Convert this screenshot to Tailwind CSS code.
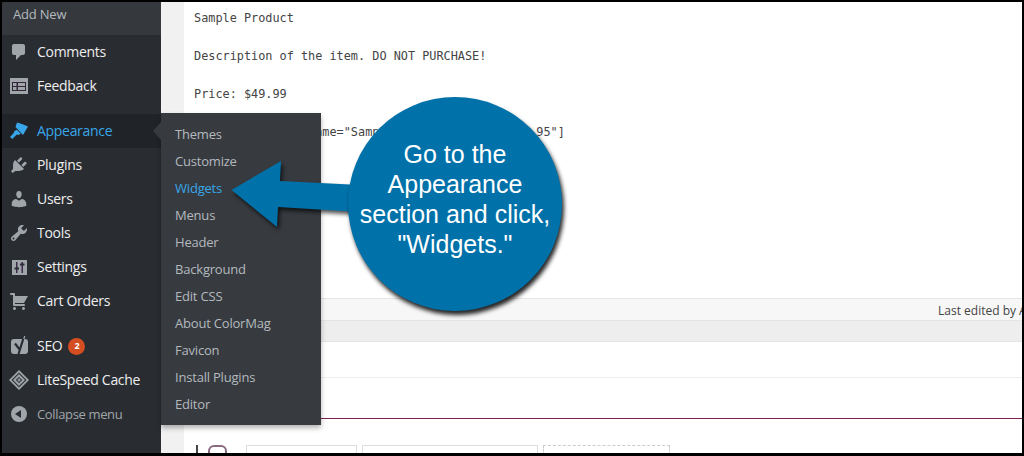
<!DOCTYPE html>
<html lang="en">
<head>
    <meta charset="UTF-8">
    <title>Appearance menu - Widgets</title>
    <script src="https://cdn.jsdelivr.net/npm/@tailwindcss/browser@4"></script>
</head>
<body class="bg-black overflow-hidden">
    <div class="relative w-[1024px] h-[456px] border-2 border-b-[3px] border-black flex overflow-hidden font-['Open_Sans',sans-serif]">

        <!-- Sidebar -->
        <aside class="w-[159px] shrink-0 bg-[#292d32] text-[14px] tracking-[-0.3px] text-[#eeeeee]">
            <div class="h-[33px] bg-[#35393e] pl-[11px] text-[13px] tracking-[-0.2px] leading-[24px] text-[#b4b9be]">Add New</div>

            <div class="h-[34px] flex items-center gap-[8px] pl-[7px]">
                <svg class="w-5 h-5" viewBox="0 0 20 20" fill="#a0a5aa"><path d="M5 2h9c1.1 0 2 .9 2 2v7c0 1.1-.9 2-2 2h-2l-5 5v-5H5c-1.1 0-2-.9-2-2V4c0-1.1.9-2 2-2z"/></svg>
                <span class="pb-[2px]">Comments</span>
            </div>
            <div class="h-[34px] flex items-center gap-[8px] pl-[7px]">
                <svg class="w-5 h-5" viewBox="0 0 20 20"><rect x="1" y="2" width="18" height="16" fill="#a0a5aa"/><rect x="3" y="6" width="14" height="9" fill="#33263a"/><rect x="4" y="7" width="3.5" height="3" fill="#a0a5aa"/><rect x="4" y="11" width="3.5" height="3" fill="#a0a5aa"/><rect x="9" y="7" width="7" height="3" fill="#a0a5aa"/><rect x="9" y="11" width="7" height="3" fill="#a0a5aa"/></svg>
                <span class="pb-[2px]">Feedback</span>
            </div>

            <div class="h-[34px] mt-[11px] flex items-center gap-[8px] pl-[7px] bg-[#202428] text-[#38a6e8]">
                <svg class="w-5 h-5" viewBox="0 0 20 20" fill="#38a6e8"><path d="M8 1.500l5 1.500 6 2.500-5 8.500-7.500-8zM7.800 8.800l4 4-2.600 1.200-1.400-.6L3.300 18 1 16l4-4.300-.1-1.200z"/></svg>
                <span class="pb-[2px]">Appearance</span>
            </div>
            <div class="h-[34px] flex items-center gap-[8px] pl-[7px]">
                <svg class="w-5 h-5" viewBox="0 0 20 20" fill="#a0a5aa"><path d="M13.11 4.36L9.87 7.6 8 5.73l3.24-3.24c.35-.34 1.05-.2 1.56.32.52.51.66 1.21.31 1.55zm-8 1.77l.91-1.12 9.01 9.01-1.19.84c-.71.71-2.63 1.16-3.82 1.16H6.14L4.9 17.26c-.59.59-1.54.59-2.12 0-.59-.58-.59-1.53 0-2.12l1.24-1.24v-3.88c0-1.13.4-3.19 1.09-3.89zm7.26 3.97l3.24-3.24c.34-.35 1.04-.21 1.55.31.52.51.66 1.21.31 1.55l-3.24 3.25z"/></svg>
                <span class="pb-[2px]">Plugins</span>
            </div>
            <div class="h-[34px] flex items-center gap-[8px] pl-[7px]">
                <svg class="w-5 h-5" viewBox="0 0 20 20" fill="#a0a5aa"><path d="M10 9.25c-2.27 0-2.73-3.44-2.73-3.44C7 4.02 7.82 2 9.97 2c2.16 0 2.98 2.02 2.71 3.81 0 0-.41 3.44-2.68 3.44zm0 2.57L12.72 10c2.39 0 4.52 2.33 4.52 4.53v2.49s-3.65 1.13-7.24 1.13c-3.65 0-7.24-1.13-7.24-1.13v-2.49c0-2.25 1.94-4.48 4.47-4.48z"/></svg>
                <span class="pb-[2px]">Users</span>
            </div>
            <div class="h-[34px] flex items-center gap-[8px] pl-[7px]">
                <svg class="w-5 h-5" viewBox="0 0 20 20" fill="#a0a5aa"><path d="M16.68 9.77c-1.34 1.34-3.3 1.67-4.95.99l-5.41 6.52c-.99.99-2.59.99-3.58 0s-.99-2.59 0-3.57l6.52-5.42c-.68-1.65-.35-3.61.99-4.95 1.28-1.28 3.12-1.62 4.72-1.06l-2.89 2.89 2.82 2.82 2.86-2.87c.53 1.58.18 3.39-1.08 4.65zM3.81 16.21c.4.39 1.04.39 1.43 0 .4-.4.4-1.04 0-1.43-.39-.4-1.03-.4-1.43 0-.39.39-.39 1.03 0 1.43z"/></svg>
                <span class="pb-[2px]">Tools</span>
            </div>
            <div class="h-[34px] flex items-center gap-[8px] pl-[7px]">
                <svg class="w-5 h-5" viewBox="0 0 20 20"><rect x="3" y="3" width="15" height="15" fill="#a0a5aa"/><rect x="7" y="5" width="1.500" height="11" fill="#3b2a48"/><rect x="12.500" y="5" width="1.500" height="11" fill="#3b2a48"/><rect x="5.500" y="10.500" width="4.500" height="2" fill="#292d32"/><rect x="11" y="6.500" width="4.500" height="2" fill="#292d32"/></svg>
                <span class="pb-[2px]">Settings</span>
            </div>
            <div class="h-[34px] flex items-center gap-[8px] pl-[7px]">
                <svg class="w-5 h-5" viewBox="0 0 20 20" fill="#a0a5aa"><path d="M6 13h9c.55 0 1 .45 1 1s-.45 1-1 1H5c-.55 0-1-.45-1-1V4H2c-.55 0-1-.45-1-1s.45-1 1-1h3c.55 0 1 .45 1 1v2h13l-4 7H6v1zm-.5 3c.83 0 1.500.67 1.500 1.500S6.330 19 5.500 19 4 18.330 4 17.500 4.670 16 5.500 16zm9 0c.83 0 1.500.67 1.500 1.500s-.67 1.500-1.500 1.500-1.500-.67-1.500-1.500.67-1.500 1.500-1.500z"/></svg>
                <span class="pb-[2px]">Cart Orders</span>
            </div>

            <div class="h-[34px] mt-[11px] flex items-center gap-[8px] pl-[7px]">
                <svg class="w-5 h-5" viewBox="0 0 20 20"><rect x="2" y="3" width="17" height="15" rx="3" fill="#a0a5aa"/><path d="M6 7.500L10.200 13M15 0.500L9.500 18" stroke="#292d32" stroke-width="2.200" fill="none"/><path d="M15.800 0L14.800 3" stroke="#a0a5aa" stroke-width="1.200" fill="none"/></svg>
                <span class="pb-[2px]">SEO</span>
                <span class="ml-[-2px] w-[17px] h-[17px] rounded-full bg-[#d54e21] flex items-center justify-center text-[9px] font-bold tracking-normal text-white">2</span>
            </div>
            <div class="h-[34px] flex items-center gap-[8px] pl-[7px]">
                <svg class="w-5 h-5" viewBox="0 0 20 20"><path d="M10 0l10 10-10 10L0 10z" fill="#a0a5aa"/><path d="M10 2.500L17.500 10 10 17.500 2.500 10z" fill="#292d32"/><path d="M10 4l6 6-6 6-6-6z" fill="#a0a5aa"/><path d="M10 6.500l3.500 3.500-3.500 3.500L6.500 10z" fill="#4a4e55"/><path d="M10.600 7.500L9 10.500h1l-.6 2 1.700-3h-1z" fill="#d8d8d8"/></svg>
                <span class="pb-[2px]">LiteSpeed Cache</span>
            </div>
            <div class="h-[34px] flex items-center gap-[8px] pl-[7px] text-[13px] tracking-[-0.35px] text-[#a0a5aa]">
                <svg class="w-5 h-5" viewBox="0 0 20 20"><circle cx="10" cy="10" r="8" fill="#a0a5aa"/><path d="M12 6v8l-6-4z" fill="#292d32"/></svg>
                <span class="pt-[2px]">Collapse menu</span>
            </div>
        </aside>

        <!-- Page content -->
        <main class="flex-1 min-w-0 bg-[#f1f1f1] pl-[23px] overflow-hidden">
            <div class="h-full bg-white text-[#32373c]">
                <div class="h-[296px] pl-[10px] pt-[7px] font-['DejaVu_Sans_Mono',monospace] text-[11.85px] leading-[19px] whitespace-pre text-[#444444]">Sample Product

Description of the item. DO NOT PURCHASE!

Price: $49.99

[wp_cart_button name="Sample Product" price="49.95"]</div>
                <div class="h-[23px] bg-[#f7f7f7] border-y border-[#e5e5e5] pl-[754px] text-[12px] leading-[24px] whitespace-nowrap text-[#444444]">Last edited by Admin on</div>
                <div class="h-[21px] bg-[#eeeeee] border-b border-[#e5e5e5]"></div>
                <div class="h-[36px] border-b border-[#eeeeee]"></div>
                <div class="h-[41px] border-b border-[#7a2150]"></div>
                <div class="flex pt-[26px] pl-[12px]">
                    <div class="flex items-start w-[50px] gap-[10px]">
                        <div class="w-[2px] h-[10px] bg-[#444444]"></div>
                        <div class="w-[19px] h-[10px] border-2 border-[#8a6a80] rounded-t-md"></div>
                    </div>
                    <div class="w-[111px] h-[10px] border border-[#dddddd]"></div>
                    <div class="w-[176px] h-[10px] ml-[5px] border border-[#dddddd]"></div>
                    <div class="w-[127px] h-[10px] ml-[5px] border border-dashed border-[#cccccc]"></div>
                </div>
            </div>
        </main>

        <!-- Flyout submenu -->
        <div class="absolute left-[159px] top-[111px] w-[160px] h-[312px] bg-[#373b40] shadow-[0_3px_5px_rgba(0,0,0,0.3)] pt-[8px] pl-[14px] text-[13px] tracking-[-0.2px] leading-[27px] text-[#b4b9be]">
            <div class="absolute left-[-8px] top-[9px] w-0 h-0 border-y-[9px] border-y-transparent border-r-[8px] border-r-[#373b40]"></div>
            <div>Themes</div>
            <div>Customize</div>
            <div class="text-[#38a6e8]">Widgets</div>
            <div>Menus</div>
            <div>Header</div>
            <div>Background</div>
            <div>Edit CSS</div>
            <div>About ColorMag</div>
            <div>Favicon</div>
            <div>Install Plugins</div>
            <div>Editor</div>
        </div>

        <!-- Callout arrow -->
        <svg class="absolute left-[-2px] top-[-2px] w-[1024px] h-[456px] drop-shadow-[2px_3px_2px_rgba(0,0,0,0.7)]" viewBox="0 0 1024 456">
            <path d="M231.500 190L281 161 280 181 360 185 360 212 278 207 277 227z" fill="#0071a9"/>
        </svg>

        <!-- Callout bubble -->
        <div class="absolute left-[346px] top-[95px] w-[214px] h-[214px] rounded-full bg-[#0071a9] shadow-[2px_4px_4px_rgba(0,0,0,0.85)] flex items-center justify-center text-center text-white font-['Liberation_Sans',sans-serif] text-[25px] leading-[30px]">
            <p class="mt-[-10px]">Go to the<br>Appearance<br>section and click,<br>"Widgets."</p>
        </div>
    </div>
</body>
</html>
